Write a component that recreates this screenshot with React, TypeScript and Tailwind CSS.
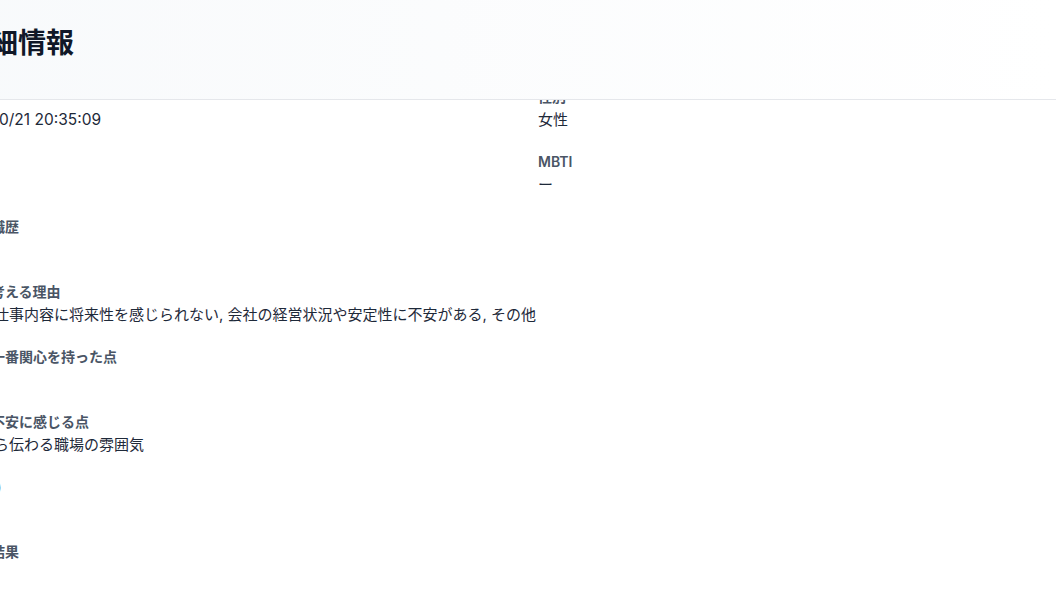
import React from "react";

type Field = {
  label: string;
  value: string;
  wide?: boolean;
  numeric?: boolean;
};

const fields: Field[] = [
  { label: "登録日", value: "2025/10/21 20:35:09", numeric: true },
  { label: "性別", value: "女性" },
  { label: "年齢", value: "28" },
  { label: "MBTI", value: "ー" },
  { label: "直近の職歴", value: "ー", wide: true },
  {
    label: "転職を考える理由",
    value: "現在の仕事内容に将来性を感じられない, 会社の経営状況や安定性に不安がある, その他",
    wide: true,
  },
  { label: "求人で一番関心を持った点", value: "ー", wide: true },
  { label: "転職で不安に感じる点", value: "求人から伝わる職場の雰囲気", wide: true },
  { label: "年収(万)", value: "ー", wide: true },
  { label: "面談の結果", value: "ー", wide: true },
];

export default function App() {
  return (
    <div className="h-[594px] w-[1056px] overflow-hidden bg-white font-['Inter','Noto_Sans_CJK_JP',sans-serif]">
      {/* Header */}
      <div className="relative z-10 h-[100px] border-b border-gray-200 bg-gradient-to-r from-slate-50 to-white">
        <h2 className="-ml-[38px] pt-[25px] text-[28px] leading-9 font-bold text-gray-900">
          詳細情報
        </h2>
      </div>

      {/* Detail fields */}
      <div className="-mt-[13px] -ml-[51px] grid grid-cols-[589px_1fr] gap-y-[19px]">
        {fields.map((f) => (
          <div key={f.label} className={f.wide ? "col-span-2" : ""}>
            <div className="text-sm leading-5 font-semibold text-gray-600">{f.label}</div>
            <div
              className={
                f.numeric
                  ? "text-[15.5px] leading-[26px] text-gray-800"
                  : "text-[15px] leading-[26px] text-gray-800"
              }
            >
              {f.value}
            </div>
          </div>
        ))}
      </div>
    </div>
  );
}
